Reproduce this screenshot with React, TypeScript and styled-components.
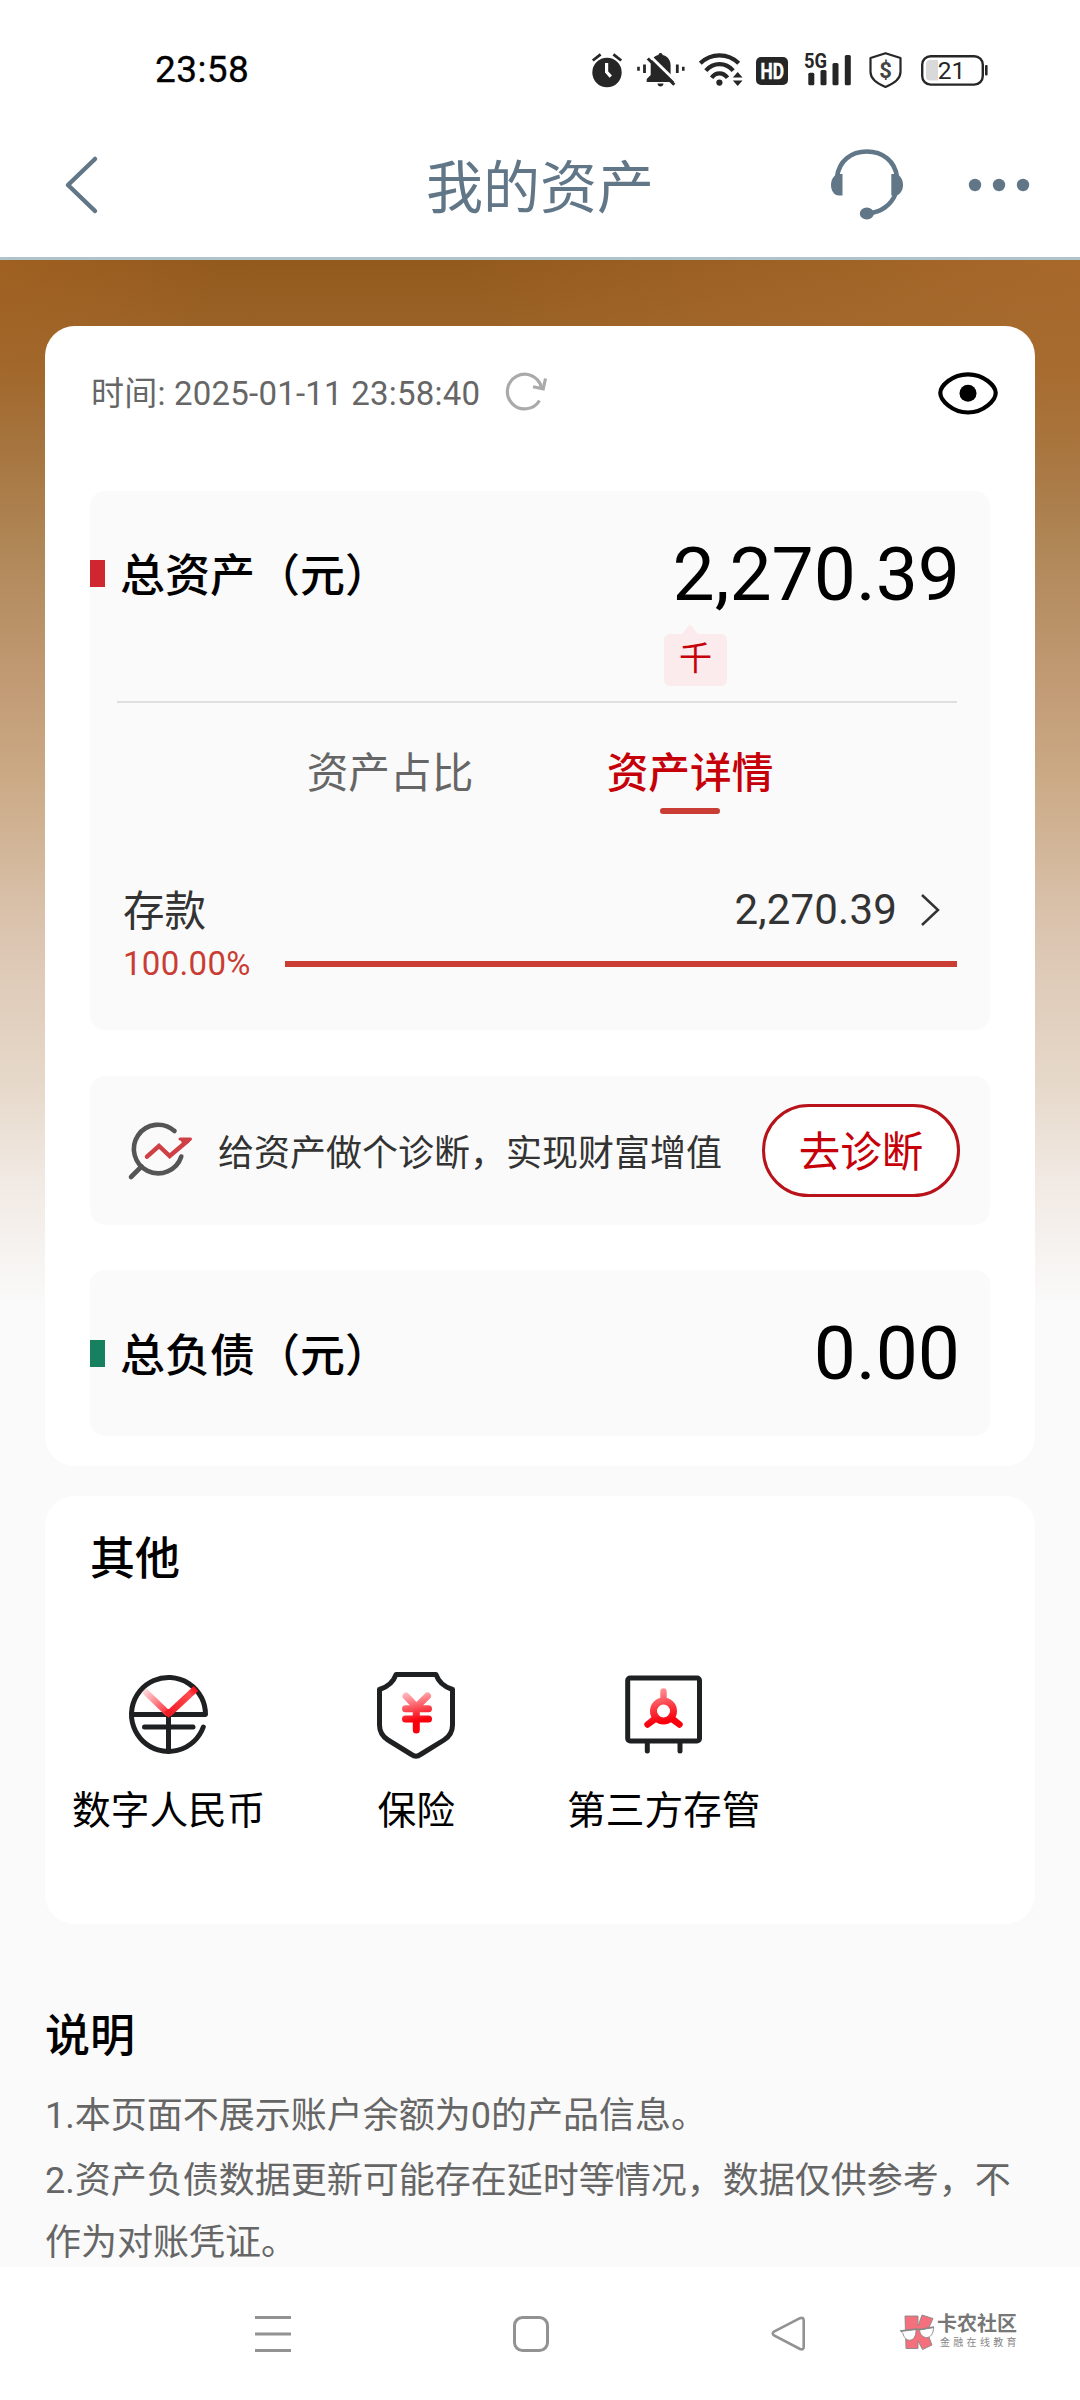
import React from "react";
import styled, { createGlobalStyle } from "styled-components";

const GlobalStyle = createGlobalStyle`
  * { box-sizing: border-box; }
  body { margin: 0; background: #fff; }
`;

const ink = "#262626";
const slate = "#617788";
const red = "#c60009";
const brick = "#c93d34";

const Screen = styled.div`
  width: 1080px;
  height: 2400px;
  display: flex;
  flex-direction: column;
  overflow: hidden;
  background: #fff;
  font-family: Roboto, "Noto Sans CJK SC", sans-serif;
  color: #000;
  white-space: nowrap;
`;

const StatusBar = styled.div`
  height: 113px;
  padding: 27px 92px 0 155px;
  display: flex;
  justify-content: space-between;
  align-items: center;
`;

const Clock = styled.div`
  font-size: 37px;
  line-height: 44px;
  font-weight: 400;
  letter-spacing: 0.4px;
  -webkit-text-stroke: 0.3px #000;
`;

const StatusIcons = styled.div`
  display: flex;
  align-items: center;
  height: 36px;
`;

const Glyph = styled.svg<{ $gap?: number }>`
  display: block;
  flex: none;
  margin-left: ${(p) => p.$gap ?? 0}px;
  overflow: visible;
`;

const Header = styled.header`
  height: 147px;
  border-bottom: 3px solid #aec3cb;
  display: grid;
  grid-template-columns: 300px 1fr 300px;
  align-items: center;
`;

const HeaderLeft = styled.div`
  padding-left: 65px;
`;

const Title = styled.h1`
  margin: 0;
  font-size: 57px;
  line-height: 70px;
  padding-top: 7px;
  font-weight: 400;
  color: ${slate};
  text-align: center;
`;

const HeaderRight = styled.div`
  display: flex;
  justify-content: flex-end;
  align-items: center;
  gap: 64px;
  padding-right: 51px;
`;

const Body = styled.main`
  height: 2007px;
  flex: none;
  overflow: hidden;
  padding: 66px 45px 0;
  background:
    radial-gradient(ellipse 220px 170px at 0 0, rgba(190, 112, 40, 0.28), rgba(190, 112, 40, 0)),
    radial-gradient(ellipse 620px 240px at 100% 0, rgba(196, 124, 60, 0.42), rgba(196, 124, 60, 0)),
    linear-gradient(180deg, #935a1e 0, #9f672c 110px, #b1895a 300px, #bf9770 400px, #cbaa86 520px, #dcc6b2 680px, #e6d8c9 820px, #f1e9e3 920px, #fafafa 1045px);
`;

const Card = styled.section<{ $height: number; $top?: number }>`
  height: ${(p) => p.$height}px;
  margin-top: ${(p) => p.$top ?? 0}px;
  border-radius: 30px;
  background: #fff;
`;

const AssetCard = styled(Card)`
  padding: 0 45px;
`;

const TimeRow = styled.div`
  height: 134px;
  margin-bottom: 31px;
  display: flex;
  align-items: center;
  justify-content: space-between;
`;

const TimeText = styled.div`
  display: flex;
  align-items: center;
  gap: 24px;
  font-size: 33px;
  line-height: 40px;
  letter-spacing: 0.22px;
  color: #666;
`;

const TimeLabel = styled.span`
  padding-top: 2px;
  padding-left: 1px;
`;

const EyeButton = styled.div`
  margin-right: -10px;
`;

const Panel = styled.div<{ $height: number; $top?: number }>`
  height: ${(p) => p.$height}px;
  margin-top: ${(p) => p.$top ?? 0}px;
  border-radius: 15px;
  background: #fafafa;
`;

const SummaryRow = styled.div<{ $height: number; $pad?: number }>`
  height: ${(p) => p.$height}px;
  padding: ${(p) => p.$pad ?? 0}px 30px 0 0;
  display: flex;
  align-items: center;
`;

const Marker = styled.span<{ $color: string }>`
  width: 15px;
  height: 27px;
  background: ${(p) => p.$color};
`;

const SummaryLabel = styled.span`
  flex: 1;
  margin-left: 15px;
  padding-top: 7px;
  font-size: 45px;
  line-height: 54px;
  font-weight: 500;
`;

const BigAmount = styled.span`
  font-size: 75px;
  line-height: 90px;
`;

const Badge = styled.div`
  width: 63px;
  margin-left: 574px;
  margin-bottom: 15px;
`;

const BadgeTip = styled.div`
  width: 0;
  height: 10px;
  margin-left: 18px;
  border: 8px solid transparent;
  border-top-width: 0;
  border-bottom: 10px solid #fbebec;
`;

const BadgeBody = styled.div`
  height: 52px;
  border-radius: 6px;
  background: #fbebec;
  color: ${red};
  font-size: 33px;
  line-height: 50px;
  text-align: center;
`;

const Divider = styled.div`
  height: 2px;
  margin: 0 33px 0 27px;
  background: #dedfde;
`;

const Tabs = styled.div`
  display: flex;
  justify-content: center;
  padding-top: 46px;
`;

const Tab = styled.div<{ $active?: boolean }>`
  width: 300px;
  height: 67px;
  display: flex;
  flex-direction: column;
  align-items: center;
  font-size: 41.7px;
  line-height: 50px;
  font-weight: ${(p) => (p.$active ? 500 : 400)};
  color: ${(p) => (p.$active ? red : "#666")};
  &::after {
    content: "";
    display: ${(p) => (p.$active ? "block" : "none")};
    width: 60px;
    height: 6px;
    margin-top: 9px;
    border-radius: 3px;
    background: ${brick};
  }
`;

const DetailRow = styled.div`
  display: flex;
  align-items: center;
  height: 50px;
  margin: 69px 51px 0 33px;
  font-size: 41.5px;
  line-height: 50px;
  color: #333;
`;

const DetailName = styled.span`
  flex: 1;
  padding-top: 3px;
`;

const DetailAmount = styled.span`
  margin-right: 24px;
  font-size: 42px;
  letter-spacing: 0.2px;
`;

const ShareRow = styled.div`
  display: flex;
  align-items: center;
  justify-content: space-between;
  height: 40px;
  margin: 9px 33px 0;
  font-size: 33px;
  line-height: 40px;
  letter-spacing: 0.3px;
  color: ${brick};
`;

const ShareBar = styled.span`
  width: 672px;
  height: 6px;
  background: ${brick};
`;

const AdvicePanel = styled(Panel)`
  display: flex;
  align-items: center;
  padding: 0 30px 0 36px;
`;

const AdviceText = styled.span`
  flex: 1;
  margin-left: 23px;
  padding-top: 6px;
  font-size: 36px;
  line-height: 44px;
  color: #333;
`;

const AdviceButton = styled.button`
  width: 198px;
  height: 93px;
  padding: 5px 0 0;
  border: 3px solid #b8121a;
  border-radius: 47px;
  background: #fff;
  color: ${red};
  font-family: inherit;
  font-size: 41.5px;
  line-height: 50px;
`;

const OtherCard = styled(Card)`
  padding-top: 39px;
`;

const SectionTitle = styled.h2<{ $indent?: number }>`
  margin: 0 0 0 ${(p) => p.$indent ?? 0}px;
  font-size: 45px;
  line-height: 50px;
  font-weight: 500;
`;

const ServiceGrid = styled.div`
  display: grid;
  grid-template-columns: repeat(4, 1fr);
  margin-top: 86px;
`;

const Service = styled.div`
  display: flex;
  flex-direction: column;
  align-items: center;
  gap: 27px;
  font-size: 38.7px;
  line-height: 50px;
`;

const Notes = styled.section`
  margin-top: 88px;
`;

const NoteList = styled.div`
  display: flex;
  flex-direction: column;
  gap: 3px;
  margin-top: 23px;
  font-size: 36px;
  line-height: 62px;
  color: #666;
`;

const Note = styled.p`
  margin: 0;
`;

const NavBar = styled.nav`
  height: 133px;
  display: flex;
  align-items: flex-start;
  padding: 46px 62px 0 255px;
`;

const NavKey = styled.div<{ $gap?: number }>`
  margin-left: ${(p) => p.$gap ?? 0}px;
  padding-top: 3px;
`;

const Watermark = styled.div`
  display: flex;
  margin-left: 93px;
  color: #777;
`;

const WatermarkText = styled.div`
  margin-left: 2px;
  display: flex;
  flex-direction: column;
`;

const BrandName = styled.span`
  font-size: 20px;
  line-height: 23px;
  font-weight: 700;
`;

const BrandTag = styled.span`
  margin-left: 3px;
  font-size: 10px;
  line-height: 14px;
  letter-spacing: 3.3px;
  color: #888;
`;

const AlarmIcon = () => (
  <Glyph width="30" height="36" viewBox="0 0 30 36" fill="none">
    <circle cx="15" cy="20.5" r="14.7" fill={ink} />
    <path d="M.8 8.5 8.6 2.3M29.2 8.5 21.4 2.3" stroke={ink} strokeWidth="2.8" />
    <path d="M14.6 11v9l4.2 4.6" stroke="#fff" strokeWidth="3.2" />
  </Glyph>
);

const BellOffIcon = () => (
  <Glyph $gap={15} width="48" height="36" viewBox="0 0 48 36" fill="none">
    <path
      d="M23.5 1c1.2 0 2 .9 2.1 2 4.700 1 8 5 8 10.200V23l4.700 4v3H9.700v-3l4-4V13.200c0-5.200 3-9.200 7.700-10.200.1-1.100.9-2 2.100-2Z"
      fill={ink}
    />
    <path d="M20.500 31.500h6c0 4-6 4-6 0Z" fill={ink} />
    <path d="M13.500 4.500 40 30.500" stroke="#fff" strokeWidth="3" />
    <path d="M10.800 6.500 37.300 32.700" stroke={ink} strokeWidth="3" />
    <path d="M7.500 12.500v8.500M40.300 12.500v8.500" stroke={ink} strokeWidth="2.800" />
    <path d="M1.500 14.800v4M46.300 14.800v4" stroke={ink} strokeWidth="2.600" />
  </Glyph>
);

const WifiIcon = () => (
  <Glyph $gap={14} width="44" height="36" viewBox="0 0 44 36" fill="none">
    <g stroke={ink} strokeWidth="4.200">
      <path d="M1.300 11.300C12 .7 29 .7 39.700 11.300" />
      <path d="M6.800 18.600C14.500 10 26.500 10 34.200 18.600" />
      <path d="M12.600 25.800C16.800 20 24.200 20 28.500 25.800" />
    </g>
    <circle cx="20.400" cy="30.600" r="3.100" fill={ink} />
    <path d="M33.800 25.500 38.700 20l4.800 5.500ZM33.800 28.500h9.700L38.700 34Z" fill={ink} />
  </Glyph>
);

const HdIcon = () => (
  <Glyph $gap={13} width="32" height="36" viewBox="0 0 32 36">
    <rect x="0" y="5" width="32" height="28" rx="5" fill={ink} />
    <text x="4.500" y="26.700" fontSize="22" fontWeight="700" textLength="23.500" lengthAdjust="spacingAndGlyphs" fill="#fff" stroke="#fff" strokeWidth=".4">
      HD
    </text>
  </Glyph>
);

const SignalIcon = () => (
  <Glyph $gap={16} width="47" height="36" viewBox="0 0 47 36" fill={ink}>
    <text x="0" y="15.500" fontSize="20" fontWeight="700" textLength="23" lengthAdjust="spacingAndGlyphs">
      5G
    </text>
    <rect x="4.300" y="20.700" width="6" height="12.500" rx="1.500" />
    <rect x="16.500" y="18" width="6" height="15.200" rx="1.500" />
    <rect x="28.500" y="11" width="6" height="22.200" rx="1.500" />
    <rect x="40.800" y="3" width="6" height="30.200" rx="1.500" />
  </Glyph>
);

const PayShieldIcon = () => (
  <Glyph $gap={18} width="33" height="36" viewBox="0 0 33 36">
    <path
      d="M16.500 1.200 31.500 6v14c0 7-6.500 11.500-15 15C8 31.500 1.500 27 1.500 20V6Z"
      fill="none"
      stroke={ink}
      strokeWidth="2.200"
      strokeLinejoin="round"
    />
    <text x="16.500" y="25.500" fontSize="22" fontWeight="700" textAnchor="middle" fill="#444">
      $
    </text>
  </Glyph>
);

const BatteryIcon = () => (
  <Glyph $gap={19} width="67" height="36" viewBox="0 0 67 36">
    <rect x="1.200" y="4.200" width="60.600" height="28.400" rx="8.500" fill="none" stroke={ink} strokeWidth="2.400" />
    <path d="M9 8h8v20.500H9a4 4 0 0 1-4-4V12a4 4 0 0 1 4-4Z" fill="#d9d9d9" />
    <rect x="64" y="13" width="2.600" height="10.500" rx="1" fill={ink} />
    <text x="30.500" y="27" fontSize="24.500" textAnchor="middle" fill={ink}>
      21
    </text>
  </Glyph>
);

const BackIcon = () => (
  <Glyph width="33" height="58" viewBox="0 0 33 58" fill="none">
    <path d="M30 3 3 29 30 55" stroke={slate} strokeWidth="4.500" strokeLinecap="round" strokeLinejoin="round" />
  </Glyph>
);

const HeadsetIcon = () => (
  <Glyph width="76" height="76" viewBox="0 0 76 76" fill="none">
    <path d="M8 30C10 14 22 4.500 37.800 4.500S66 14 68 30" stroke={slate} strokeWidth="4.600" />
    <path d="M66.500 47C62 58 52 65.500 40 66" stroke={slate} strokeWidth="4.600" />
    <path d="M13.500 27v21.500H10C5 48.500 2 43.500 2 38s3-10 7-11Z" fill={slate} />
    <path d="M62.300 27v21.500h3.500c5 0 8.200-5 8.200-10.500s-3-10-7-11Z" fill={slate} />
    <ellipse cx="37.800" cy="66.500" rx="7" ry="6" fill={slate} />
  </Glyph>
);

const MoreIcon = () => (
  <Glyph width="60" height="12" viewBox="0 0 60 12" fill={slate}>
    <circle cx="6" cy="6" r="6.200" />
    <circle cx="30" cy="6" r="6.200" />
    <circle cx="54" cy="6" r="6.200" />
  </Glyph>
);

const RefreshIcon = () => (
  <Glyph width="46" height="42" viewBox="0 0 46 42" fill="none" stroke="#aaa" strokeWidth="3.200">
    <path d="M35.500 28.500A17.300 17.300 0 1 1 37.500 15.500" />
    <path d="m41.500 6.500-2.300 10.300-10.200-2" />
  </Glyph>
);

const EyeIcon = () => (
  <Glyph width="64" height="46" viewBox="0 0 64 46" fill="none">
    <path
      d="M4.300 23C4.300 16 16 4.300 32 4.300S59.700 16 59.700 23 48 42.500 32 42.500 4.300 30 4.300 23Z"
      stroke="#000"
      strokeWidth="4.200"
    />
    <circle cx="32" cy="23.300" r="8.500" fill="#000" />
  </Glyph>
);

const ChevronIcon = () => (
  <Glyph width="18" height="32" viewBox="0 0 18 32" fill="none">
    <path d="m1 1 16 15L1 31" stroke="#333" strokeWidth="2.500" />
  </Glyph>
);

const DiagnoseIcon = () => (
  <Glyph width="69" height="62" viewBox="0 0 69 62" fill="none" strokeLinecap="round">
    <path d="M48.500 11A24.300 24.300 0 1 0 55.300 36.500" stroke="#555" strokeWidth="4.600" />
    <path d="M15.500 46.500 5 57" stroke="#555" strokeWidth="4.600" />
    <path d="M21 36.700 33 26l10.700 10L62 20.500" stroke="#cf4046" strokeWidth="4.400" />
    <path d="M54 19h10.500l-7.500 6" fill="#cf4046" stroke="#cf4046" strokeWidth="3" strokeLinejoin="round" />
  </Glyph>
);

const DigitalYuanIcon = () => (
  <Glyph width="88" height="88" viewBox="0 0 88 88" fill="none">
    <defs>
      <linearGradient id="armL" x1="19" y1="19" x2="44" y2="43" gradientUnits="userSpaceOnUse">
        <stop offset="0" stopColor="#ffe3e5" />
        <stop offset="1" stopColor="#fb2834" />
      </linearGradient>
      <linearGradient id="armR" x1="73" y1="17" x2="44" y2="43" gradientUnits="userSpaceOnUse">
        <stop offset="0" stopColor="#f4000c" />
        <stop offset=".25" stopColor="#ff4a4f" />
        <stop offset="1" stopColor="#ee1a24" />
      </linearGradient>
    </defs>
    <g transform="translate(-1 0)">
      <g stroke="#1f2022" strokeWidth="5" strokeLinecap="round" strokeLinejoin="round">
        <path d="M7.500 43.500H81.500A37 37 0 1 0 79.300 56" />
        <path d="M20.500 56H69M44.500 46v34" />
      </g>
      <path d="M20 19.500 44.500 43" stroke="url(#armL)" strokeWidth="6.500" />
      <path d="M72 17.500 44.500 43" stroke="url(#armR)" strokeWidth="6.500" />
      <path d="m40 41 4.500-3 4.500 3-4.500 6Z" fill="#ee1a24" />
    </g>
  </Glyph>
);

const InsuranceIcon = () => (
  <Glyph width="88" height="88" viewBox="0 0 88 88" fill="none">
    <defs>
      <linearGradient id="yen" x1="38" y1="20" x2="46" y2="60" gradientUnits="userSpaceOnUse">
        <stop offset="0" stopColor="#ffc4c8" />
        <stop offset=".45" stopColor="#fb4c54" />
        <stop offset=".75" stopColor="#f8000c" />
      </linearGradient>
    </defs>
    <path
      d="M24 3.500H64C66.500 11 71 15.500 80.500 18.500V54C80.500 61 77.500 65.500 72 69L48.500 83.500Q44 87 39.500 83.500L16 69C10.500 65.500 7.500 61 7.500 54V18.500C17 15.500 21.500 11 24 3.500Z"
      stroke="#1f2022"
      strokeWidth="5"
      strokeLinejoin="round"
    />
    <path
      d="M34 25 44.300 36 55.500 25M33.500 37.700H56.500M33.500 48H56.500M44.300 36V59"
      stroke="url(#yen)"
      strokeWidth="7"
      strokeLinecap="round"
    />
  </Glyph>
);

const CustodyIcon = () => (
  <Glyph width="88" height="88" viewBox="0 0 88 88" fill="none">
    <defs>
      <linearGradient id="dial" x1="38" y1="16" x2="47" y2="56" gradientUnits="userSpaceOnUse">
        <stop offset="0" stopColor="#ff9ea3" />
        <stop offset=".5" stopColor="#fb3b44" />
        <stop offset=".85" stopColor="#f8000c" />
      </linearGradient>
    </defs>
    <g stroke="#1f2022" strokeWidth="5" strokeLinecap="round">
      <rect x="7.700" y="7" width="71.800" height="63" rx="2.500" />
      <path d="M27.300 71v9M60 71v9" />
    </g>
    <circle cx="43.500" cy="40" r="10" stroke="url(#dial)" strokeWidth="7" />
    <path
      d="M40.300 30V20.500a3.200 3.200 0 0 1 6.400 0V30ZM33.500 44.500l-8 6.500a3.200 3.200 0 0 0 4 5l9-6.500ZM53.500 44.500l8 6.500a3.200 3.200 0 0 1-4 5l-9-6.500Z"
      fill="url(#dial)"
    />
  </Glyph>
);

const MenuKey = () => (
  <Glyph width="36" height="36" viewBox="0 0 36 36">
    <path d="M0 1.500h36M0 18h36M0 34.500h36" stroke="#929292" strokeWidth="3" />
  </Glyph>
);

const HomeKey = () => (
  <Glyph width="36" height="36" viewBox="0 0 36 36">
    <rect x="1.500" y="1.500" width="33" height="33" rx="8" fill="none" stroke="#929292" strokeWidth="3" />
  </Glyph>
);

const BackKey = () => (
  <Glyph width="35" height="36" viewBox="0 0 35 36">
    <path
      d="M29 2.200 3 15.500Q.500 17.500 3 19.500L29 33Q32.700 34.300 32.700 31V4.500Q32.700 1 29 2.200Z"
      fill="none"
      stroke="#929292"
      strokeWidth="2.600"
    />
  </Glyph>
);

const KLogo = () => (
  <Glyph width="36" height="38" viewBox="0 0 36 38">
    <path
      d="M6 3H19V13L23 2 34 5.500 28 19 33 32 23.500 36.500 19 28V35.500H7Z"
      fill="#f4707c"
      stroke="#888"
      strokeWidth=".9"
    />
    <path d="M2 18.500 17 16.500C17.500 30 6 30 4 20.500ZM20.500 17 34.500 14.500C34.500 28 21.500 27 20.500 17Z" fill="#fff" stroke="#888" strokeWidth=".9" />
    <path d="M1 17.800 17 16 20.500 16.500 35 14" fill="none" stroke="#888" strokeWidth="1.300" />
  </Glyph>
);

const services = [
  { name: "数字人民币", Icon: DigitalYuanIcon },
  { name: "保险", Icon: InsuranceIcon },
  { name: "第三方存管", Icon: CustodyIcon },
];

export default function App() {
  return (
    <Screen>
      <GlobalStyle />
      <StatusBar>
        <Clock>23:58</Clock>
        <StatusIcons>
          <AlarmIcon />
          <BellOffIcon />
          <WifiIcon />
          <HdIcon />
          <SignalIcon />
          <PayShieldIcon />
          <BatteryIcon />
        </StatusIcons>
      </StatusBar>
      <Header>
        <HeaderLeft>
          <BackIcon />
        </HeaderLeft>
        <Title>我的资产</Title>
        <HeaderRight>
          <HeadsetIcon />
          <MoreIcon />
        </HeaderRight>
      </Header>
      <Body>
        <AssetCard $height={1140}>
          <TimeRow>
            <TimeText>
              <TimeLabel>时间: 2025-01-11 23:58:40</TimeLabel>
              <RefreshIcon />
            </TimeText>
            <EyeButton>
              <EyeIcon />
            </EyeButton>
          </TimeRow>
          <Panel $height={539}>
            <SummaryRow $height={133} $pad={32}>
              <Marker $color="#d0262f" />
              <SummaryLabel>总资产（元）</SummaryLabel>
              <BigAmount>2,270.39</BigAmount>
            </SummaryRow>
            <Badge>
              <BadgeTip />
              <BadgeBody>千</BadgeBody>
            </Badge>
            <Divider />
            <Tabs>
              <Tab>资产占比</Tab>
              <Tab $active>资产详情</Tab>
            </Tabs>
            <DetailRow>
              <DetailName>存款</DetailName>
              <DetailAmount>2,270.39</DetailAmount>
              <ChevronIcon />
            </DetailRow>
            <ShareRow>
              <span>100.00%</span>
              <ShareBar />
            </ShareRow>
          </Panel>
          <AdvicePanel $height={149} $top={46}>
            <DiagnoseIcon />
            <AdviceText>给资产做个诊断，实现财富增值</AdviceText>
            <AdviceButton>去诊断</AdviceButton>
          </AdvicePanel>
          <Panel $height={166} $top={45}>
            <SummaryRow $height={166}>
              <Marker $color="#17815f" />
              <SummaryLabel>总负债（元）</SummaryLabel>
              <BigAmount>0.00</BigAmount>
            </SummaryRow>
          </Panel>
        </AssetCard>
        <OtherCard $height={428} $top={30}>
          <SectionTitle $indent={45}>其他</SectionTitle>
          <ServiceGrid>
            {services.map(({ name, Icon }) => (
              <Service key={name}>
                <Icon />
                <span>{name}</span>
              </Service>
            ))}
          </ServiceGrid>
        </OtherCard>
        <Notes>
          <SectionTitle>说明</SectionTitle>
          <NoteList>
            <Note>1.本页面不展示账户余额为0的产品信息。</Note>
            <Note>
              2.资产负债数据更新可能存在延时等情况，数据仅供参考，不
              <br />
              作为对账凭证。
            </Note>
          </NoteList>
        </Notes>
      </Body>
      <NavBar>
        <NavKey>
          <MenuKey />
        </NavKey>
        <NavKey $gap={222}>
          <HomeKey />
        </NavKey>
        <NavKey $gap={222}>
          <BackKey />
        </NavKey>
        <Watermark>
          <KLogo />
          <WatermarkText>
            <BrandName>卡农社区</BrandName>
            <BrandTag>金融在线教育</BrandTag>
          </WatermarkText>
        </Watermark>
      </NavBar>
    </Screen>
  );
}
